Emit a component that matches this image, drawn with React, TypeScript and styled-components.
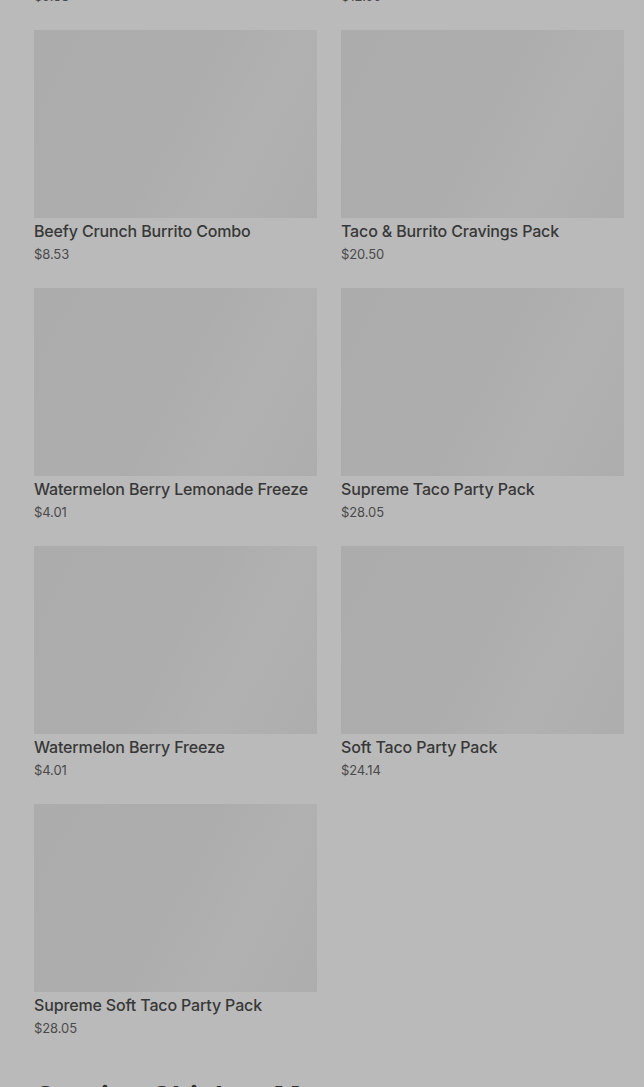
import React from "react";
import styled, { createGlobalStyle } from "styled-components";

const Global = createGlobalStyle`
  html, body { margin: 0; padding: 0; background: #bababa; }
  body { font-family: "Inter", "Roboto", "Liberation Sans", sans-serif; overflow: hidden; }
`;

const Page = styled.div`
  padding: 0 20px 40px 34px;
  margin-top: -228px;
`;

const Grid = styled.div`
  display: grid;
  grid-template-columns: 1fr 1fr;
  column-gap: 24px;
  row-gap: 24px;
`;

const Card = styled.div`
  display: flex;
  flex-direction: column;
`;

const Thumb = styled.div`
  height: 188px;
  background: linear-gradient(
    118deg,
    #acacac 0%,
    #adadad 50%,
    #b1b1b1 72%,
    #adadad 100%
  );
`;

const Title = styled.div`
  margin-top: 1px;
  font-size: 16px;
  line-height: 24px;
  font-weight: 500;
  color: #383838;
  letter-spacing: -0.15px;
`;

const Price = styled.div`
  margin-top: 1px;
  font-size: 13px;
  line-height: 20px;
  font-weight: 400;
  color: #4a4a4a;
  letter-spacing: -0.1px;
`;

const Heading = styled.h2`
  margin: 41px 0 0;
  font-size: 29px;
  line-height: 36px;
  font-weight: 700;
  color: #2e2e2e;
`;

const items = [
  { name: "Cheesy Gordita Crunch Combo", price: "$9.88" },
  { name: "Nachos Party Pack", price: "$12.99" },
  { name: "Beefy Crunch Burrito Combo", price: "$8.53" },
  { name: "Taco & Burrito Cravings Pack", price: "$20.50" },
  { name: "Watermelon Berry Lemonade Freeze", price: "$4.01" },
  { name: "Supreme Taco Party Pack", price: "$28.05" },
  { name: "Watermelon Berry Freeze", price: "$4.01" },
  { name: "Soft Taco Party Pack", price: "$24.14" },
  { name: "Supreme Soft Taco Party Pack", price: "$28.05" },
];

export default function App() {
  return (
    <>
      <Global />
      <Page>
        <Grid>
          {items.map((it, i) => (
            <Card key={i}>
              <Thumb />
              <Title>{it.name}</Title>
              <Price>{it.price}</Price>
            </Card>
          ))}
        </Grid>
        <Heading>Cantina Chicken Menu</Heading>
      </Page>
    </>
  );
}
